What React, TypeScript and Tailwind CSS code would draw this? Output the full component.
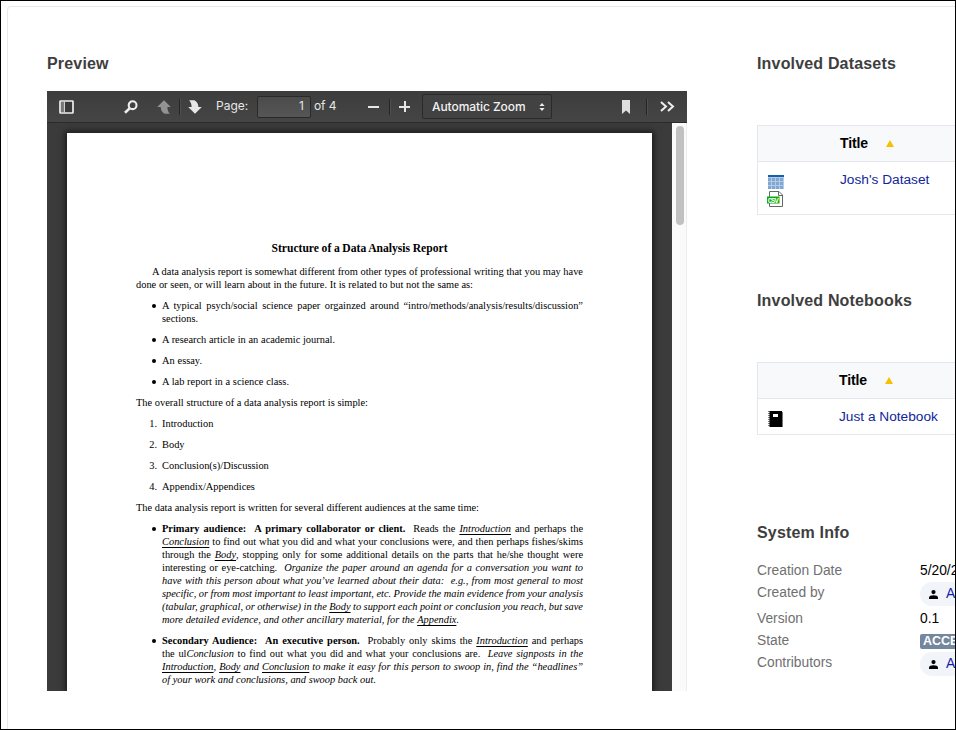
import type { ReactNode } from "react";

const SANS = "font-['Liberation_Sans',Arial,sans-serif]";

function Line({ children, w = "w-full" }: { children: ReactNode; w?: string }) {
  return (
    <div className={`h-[13px] leading-[13px] whitespace-nowrap [text-align-last:justify] ${w}`}>
      {children}
    </div>
  );
}

function Item({ mark = "•", children }: { mark?: string; children: ReactNode }) {
  return (
    <div className="mt-2 flex">
      <div className="w-[26px] shrink-0 pr-[5px] text-right leading-[13px]">
        {mark === "•" ? <span className="mt-[5px] mr-px ml-auto block size-1 rounded-full bg-black" /> : mark}
      </div>
      <div className="min-w-0 flex-1">{children}</div>
    </div>
  );
}

function U({ children }: { children: ReactNode }) {
  return <i className="underline decoration-1 underline-offset-2">{children}</i>;
}

function Separator({ className }: { className: string }) {
  return <div className={`h-4 w-px bg-[#242424] shadow-[1px_0_0_#505050] ${className}`} />;
}

function Toolbar() {
  return (
    <div className="flex h-8 w-full items-center border-b border-[#2b2b2b] bg-linear-to-b from-[#3d3d3d] to-[#454545] font-['Inter',sans-serif] text-[12px] text-[#e6e6e6]">
      <svg className="ml-[11.5px] h-[14px] w-[15px]" viewBox="0 0 15 14">
        <rect x="1" y="1" width="13" height="12" rx="0.6" fill="#3a3a3a" stroke="#eee" strokeWidth="1.7" />
        <rect x="2" y="2" width="2.8" height="10" fill="#777" />
        <rect x="4.8" y="1" width="1.2" height="12" fill="#d0d0d0" />
      </svg>
      <svg className="ml-[50px] h-[14px] w-[14px]" viewBox="0 0 14 14" fill="none" stroke="#eee">
        <circle cx="8.6" cy="5.2" r="3.9" strokeWidth="2.1" />
        <path d="M5.6 8.4 1 12.8" strokeWidth="2.6" />
      </svg>
      <svg className="ml-[19.5px] h-[14px] w-[14px]" viewBox="0 0 14 14" fill="#939393">
        <path d="M7 .3 13.8 7H10.4C10.4 10 11.2 12 12.9 13.8H7.6C5 12.4 3.8 10.3 3.7 7H.2Z" />
      </svg>
      <Separator className="ml-2" />
      <svg className="ml-2 h-[14px] w-[14px]" viewBox="0 0 14 14" fill="#e8e8e8">
        <path d="M7 13.7 13.8 7H10.4C10.3 3.7 9 1.6 6.4.2H1.1C2.8 2 3.6 4 3.6 7H.2Z" />
      </svg>
      <span className="ml-[14px] w-8 pb-[2px] whitespace-nowrap">Page:</span>
      <div className="ml-[9px] h-[22px] w-[54px] rounded-[2px] border border-[#292929] bg-linear-to-b from-[#4b4b4b] to-[#565656] pr-[6px] text-right leading-[18px]">
        1
      </div>
      <span className="ml-[3px] w-6 pb-[2px] tracking-[-0.1px] whitespace-nowrap">of 4</span>
      <div className="ml-[29.5px] h-[2px] w-[11px] bg-[#e6e6e6]" />
      <Separator className="ml-[10px]" />
      <div className="relative ml-[9.5px] size-[11px]">
        <div className="absolute top-[4.5px] h-[2px] w-[11px] bg-[#e6e6e6]" />
        <div className="absolute left-[4.5px] h-[11px] w-[2px] bg-[#e6e6e6]" />
      </div>
      <div className="ml-3 flex h-[25px] w-[130px] items-center justify-between rounded-[2px] border border-[#2a2a2a] bg-[#424242] pr-[6px] pl-[9px] font-medium text-[#f2f2f2]">
        <span className="tracking-[-0.07px] whitespace-nowrap">Automatic Zoom</span>
        <svg className="h-2 w-[6px]" viewBox="0 0 6 8" fill="#eee">
          <path d="M3 0 5.6 3H.4ZM3 8 .4 5h5.2Z" />
        </svg>
      </div>
      <svg className="ml-[70px] h-[14px] w-2" viewBox="0 0 8 14" fill="#dedede">
        <path d="M0 0h8v14L4 10.5 0 14Z" />
      </svg>
      <Separator className="ml-4" />
      <svg className="ml-[13px] h-[11px] w-[15px]" viewBox="0 0 15 11" fill="none" stroke="#eee" strokeWidth="2">
        <path d="M1 1 6 5.5 1 10M8 1l5 4.5L8 10" />
      </svg>
    </div>
  );
}

function Document() {
  return (
    <div className="mt-[10px] ml-5 h-[558px] w-[585px] bg-white pt-[109px] pr-[69px] pl-[69px] font-['Liberation_Serif',serif] text-[10.4px] [word-spacing:-0.3px] text-black shadow-[0_0_6px_2px_rgba(0,0,0,0.55)]">
      <div className="mx-auto w-[176px] text-[11.6px] font-bold">
        <Line>Structure of a Data Analysis Report</Line>
      </div>
      <div className="mt-[10px] pl-4">
        <Line>A data analysis report is somewhat different from other types of professional writing that you may have</Line>
      </div>
      <Line w="w-[337px]">done or seen, or will learn about in the future. It is related to but not the same as:</Line>
      <Item>
        <Line>A typical psych/social science paper orgainzed around “intro/methods/analysis/results/discussion”</Line>
        <Line w="w-[36px]">sections.</Line>
      </Item>
      <Item><Line w="w-[173px]">A research article in an academic journal.</Line></Item>
      <Item><Line w="w-[40px]">An essay.</Line></Item>
      <Item><Line w="w-[127px]">A lab report in a science class.</Line></Item>
      <div className="mt-2"><Line w="w-[232px]">The overall structure of a data analysis report is simple:</Line></div>
      <Item mark="1."><Line w="w-[51px]">Introduction</Line></Item>
      <Item mark="2."><Line w="w-[22px]">Body</Line></Item>
      <Item mark="3."><Line w="w-[107px]">Conclusion(s)/Discussion</Line></Item>
      <Item mark="4."><Line w="w-[93px]">Appendix/Appendices</Line></Item>
      <div className="mt-2"><Line w="w-[343px]">The data analysis report is written for several different audiences at the same time:</Line></div>
      <Item>
        <Line><b>Primary audience: &nbsp;A primary collaborator or client.</b> &nbsp;Reads the <U>Introduction</U> and perhaps the</Line>
        <Line><U>Conclusion</U> to find out what you did and what your conclusions were, and then perhaps fishes/skims</Line>
        <Line>through the <U>Body</U>, stopping only for some additional details on the parts that he/she thought were</Line>
        <Line>interesting or eye-catching. &nbsp;<i>Organize the paper around an agenda for a conversation you want to</i></Line>
        <Line><i>have with this person about what you’ve learned about their data: &nbsp;e.g., from most general to most</i></Line>
        <Line><i>specific, or from most important to least important, etc. Provide the main evidence from your analysis</i></Line>
        <Line><i>(tabular, graphical, or otherwise) in the <U>Body</U> to support each point or conclusion you reach, but save</i></Line>
        <Line w="w-[297px]"><i>more detailed evidence, and other ancillary material, for the <U>Appendix</U>.</i></Line>
      </Item>
      <Item>
        <Line><b>Secondary Audience: &nbsp;An executive person.</b> &nbsp;Probably only skims the <U>Introduction</U> and perhaps</Line>
        <Line>the ul<i>Conclusion</i> to find out what you did and what your conclusions are. &nbsp;<i>Leave signposts in the</i></Line>
        <Line><i><U>Introduction</U>, <U>Body</U> and <U>Conclusion</U> to make it easy for this person to swoop in, find the “headlines”</i></Line>
        <Line w="w-[214px]"><i>of your work and conclusions, and swoop back out.</i></Line>
      </Item>
    </div>
  );
}

function Heading({ children }: { children: ReactNode }) {
  return <h2 className="h-5 text-[16px] leading-5 font-bold tracking-[0.17px] whitespace-nowrap text-[#3e3e3e]">{children}</h2>;
}

function Table({ link, icons, height, shift }: { link: string; icons: ReactNode; height: string; shift: string }) {
  return (
    <div className="w-[240px] border border-[#e4e7ee] text-[14px]">
      <div className={`flex h-9 items-center border-b border-[#e4e7ee] bg-[#f8f9fb] font-bold text-black ${shift}`}>
        <span className="w-7 tracking-[-0.1px]">Title</span>
        <svg className="ml-[17.5px] h-[7px] w-2" viewBox="0 0 8 7" fill="#f5c000">
          <path d="M4 0 8 7H0Z" />
        </svg>
      </div>
      <div className={`relative ${height} ${shift} pt-2`}>
        <div className="absolute top-[13px] left-[10px]">{icons}</div>
        <span className="block text-[13.7px] leading-5 whitespace-nowrap text-[#11259a]">{link}</span>
      </div>
    </div>
  );
}

function DatasetIcons() {
  return (
    <svg className="-ml-px h-8 w-[17px]" viewBox="0 0 17 32">
      <rect x="1" y="0" width="16" height="14" fill="#b3cbe5" />
      <rect x="1" y="0" width="16" height="2" fill="#1560ac" />
      <g fill="#7fa7d2">
        {[1, 5, 9, 13].flatMap((x) => [3, 7, 11].map((y) => <rect key={`${x}-${y}`} x={x} y={y} width="3" height="3" />))}
      </g>
      <path d="M2.5 16.5H12L15.5 20V31.5H2.5Z" fill="#fff" stroke="#666" />
      <path d="M11.5 16.5V20.5H15.5" fill="none" stroke="#666" />
      <rect x="0" y="21.5" width="12.5" height="7" fill="#0aad0a" />
      <text x="0.7" y="27.5" fontSize="7" fontWeight="bold" fill="#fff" textLength="11" fontFamily="Liberation Mono">CSV</text>
    </svg>
  );
}

function NotebookIcon() {
  return (
    <svg className="-mt-px h-4 w-[15px]" viewBox="0 0 15 16">
      <rect x="1.5" width="12.5" height="16" fill="#000" />
      <path d="M1 0V16" stroke="#000" strokeDasharray="1 1" />
      <path d="M14.5 1V16" stroke="#777" />
      <rect x="5" y="3" width="5" height="3" fill="#fff" />
    </svg>
  );
}

function Person() {
  return (
    <div className="-mt-px flex h-6 w-[100px] items-center rounded-full bg-[#f1f4f9] pl-[9px] text-[#1122aa]">
      <svg className="h-[9px] w-[9px]" viewBox="0 0 9 9" fill="#000">
        <circle cx="4.5" cy="2.1" r="2.1" />
        <path d="M0 9V7.7C0 5.9 2 5.2 4.5 5.2S9 5.9 9 7.7V9Z" />
      </svg>
      <span className="ml-2">Admin</span>
    </div>
  );
}

function Info({ label, h, children }: { label: string; h: string; children: ReactNode }) {
  return (
    <div className={`flex items-start ${h}`}>
      <span className="w-[163px] shrink-0 leading-5 text-[#707070]">{label}</span>
      <div className="leading-5 whitespace-nowrap text-black">{children}</div>
    </div>
  );
}

export default function App() {
  return (
    <div className={`h-[730px] w-[956px] overflow-hidden border border-black bg-white ${SANS}`}>
      <div className="mt-[5px] ml-[6px] flex h-[760px] w-[1100px] rounded-tl border border-[#e8e8f0] bg-white">
        <section className="ml-[39px] w-[640px] shrink-0 pt-[47px]">
          <Heading>Preview</Heading>
          <div className="mt-[17px] h-[600px] overflow-hidden bg-[#3a3a3a]">
            <Toolbar />
            <div className="flex h-[568px]">
              <div className="w-[625px] overflow-hidden bg-[#3b3b3b]">
                <Document />
              </div>
              <div className="w-[15px] border-r border-[#ececec] bg-[#fafafa] pt-[3px] pl-1">
                <div className="h-[99px] w-2 rounded-full bg-[#c1c1c1]" />
              </div>
            </div>
          </div>
        </section>
        <section className="ml-[70px] pt-[47px]">
          <Heading>Involved Datasets</Heading>
          <div className="mt-[51px]">
            <Table link="Josh's Dataset" icons={<DatasetIcons />} height="h-[52px]" shift="pl-[82px]" />
          </div>
          <div className="mt-[76px]">
            <Heading>Involved Notebooks</Heading>
          </div>
          <div className="mt-[51px]">
            <Table link="Just a Notebook" icons={<NotebookIcon />} height="h-[35px]" shift="pl-[81px]" />
          </div>
          <div className="mt-[88px]">
            <Heading>System Info</Heading>
          </div>
          <div className="mt-[18px] text-[13.8px]">
            <Info label="Creation Date" h="h-[22px]">5/20/2020</Info>
            <Info label="Created by" h="h-[26px]"><Person /></Info>
            <Info label="Version" h="h-[22px]">0.1</Info>
            <Info label="State" h="h-[22px]">
              <div className="mt-[3px] h-[15px] rounded-[2px] bg-[#75879d] px-[3px] text-[12.5px] leading-[14px] font-bold text-white">ACCEPTED</div>
            </Info>
            <Info label="Contributors" h="h-[22px]"><Person /></Info>
          </div>
        </section>
      </div>
    </div>
  );
}
